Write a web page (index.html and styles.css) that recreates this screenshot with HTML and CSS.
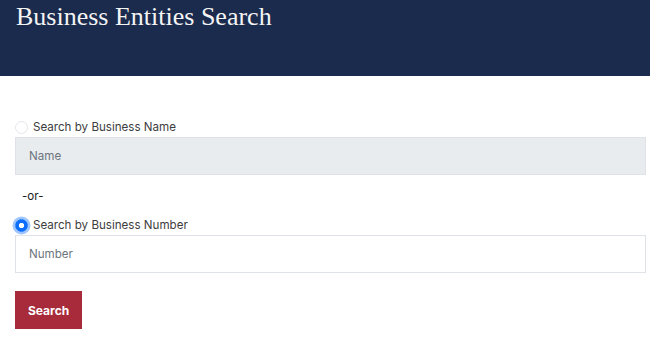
FILE: index.html
```html
<!DOCTYPE html>
<html lang="en">
<head>
<meta charset="utf-8">
<title>Business Entities Search</title>
<link rel="stylesheet" href="styles.css">
</head>
<body>
<header class="banner">
  <h1 class="title">Business Entities Search</h1>
</header>
<main class="content">
  <form class="search-form">
    <label class="option">
      <span class="radio"></span>
      <span class="option-label">Search by Business Name</span>
    </label>
    <div class="field field-disabled">Name</div>
    <div class="or">-or-</div>
    <label class="option">
      <span class="radio radio-checked"></span>
      <span class="option-label">Search by Business Number</span>
    </label>
    <div class="field">Number</div>
    <div class="actions">
      <button type="button" class="btn">Search</button>
    </div>
  </form>
</main>
</body>
</html>
```
FILE: styles.css
```css
html, body {
  margin: 0;
  padding: 0;
  background: #ffffff;
}
body {
  font-family: Inter, "Noto Sans", sans-serif;
  font-size: 11.6px;
  color: #3d3d3d;
}
.banner {
  background: #1b2b4d;
  height: 76px;
  padding: 0 16px;
  box-sizing: border-box;
}
.title {
  margin: 0;
  padding-top: 2px;
  font-family: "Liberation Serif", "DejaVu Serif", serif;
  font-weight: 400;
  font-size: 26px;
  line-height: 30px;
  color: #f4f4f4;
}
.content {
  padding: 41px 4px 0 15px;
}
.search-form {
  display: flex;
  flex-direction: column;
}
.option {
  display: flex;
  align-items: center;
  gap: 5px;
  height: 20px;
}
.radio {
  width: 13px;
  height: 13px;
  border-radius: 50%;
  border: 1px solid #e4e6ea;
  background: #ffffff;
  box-sizing: border-box;
  flex: none;
}
.radio-checked {
  border-color: #0d6efd;
  background: radial-gradient(circle, #ffffff 0 2.3px, #0d6efd 3px);
  box-shadow: 0 0 0 2.5px rgba(13, 110, 253, 0.4);
}
.option-label {
  line-height: 20px;
}
.field {
  height: 38px;
  box-sizing: border-box;
  border: 1px solid #dfe2e6;
  padding: 0 13px;
  display: flex;
  align-items: center;
  color: #6c757d;
  background: #ffffff;
}
.field-disabled {
  background: #e9ecef;
}
.or {
  padding: 11px 0 9px 7px;
  line-height: 20px;
  color: #222222;
}
.actions {
  margin-top: 18px;
  display: flex;
}
.btn {
  font-family: Inter, "Noto Sans", sans-serif;
  font-weight: 700;
  font-size: 12px;
  color: #ffffff;
  background: #a82b3c;
  border: 0;
  height: 38px;
  padding: 0 13px;
  border-radius: 0;
}
```
